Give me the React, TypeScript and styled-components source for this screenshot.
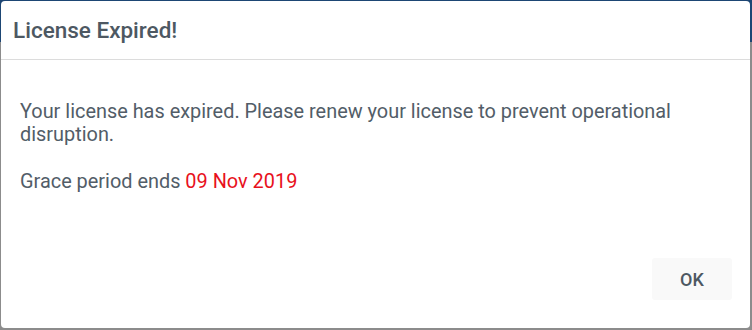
import React from "react";
import styled, { createGlobalStyle } from "styled-components";

const Global = createGlobalStyle`
  html, body { margin: 0; padding: 0; }
  body {
    width: 752px;
    height: 330px;
    background: #8c8c8c;
    font-family: Roboto, "Noto Sans", Arial, sans-serif;
    overflow: hidden;
  }
`;

const PageHeader = styled.div`
  height: 42px;
  background: #1d4674;
`;

const Dialog = styled.div`
  position: fixed;
  left: 1px;
  top: 1px;
  width: 749px;
  height: 327px;
  background: #ffffff;
  border-radius: 4px;
  display: flex;
  flex-direction: column;
  box-sizing: border-box;
`;

const Header = styled.div`
  height: 58px;
  display: flex;
  align-items: center;
  padding: 0 12px;
  border-bottom: 1px solid #dcdcdc;
`;

const Title = styled.h2`
  margin: 0;
  font-size: 22.5px;
  font-weight: 500;
  color: #4d5862;
`;

const Body = styled.div`
  flex: 1;
  padding: 40px 19px 0 19px;
  color: #525d68;
  font-size: 19.9px;
  line-height: 23px;
`;

const Paragraph = styled.p`
  margin: 0 0 24px 0;
`;

const Date = styled.span`
  color: #e8111c;
`;

const Footer = styled.div`
  display: flex;
  justify-content: flex-end;
  padding: 0 18px 28px 0;
`;

const Button = styled.button`
  width: 80px;
  height: 42px;
  border: none;
  border-radius: 3px;
  background: #f9f9f9;
  color: #4d5862;
  font-family: Roboto, "Noto Sans", Arial, sans-serif;
  font-size: 18px;
  font-weight: 500;
  cursor: pointer;
`;

export default function App() {
  return (
    <>
      <Global />
      <PageHeader />
      <Dialog>
        <Header>
          <Title>License Expired!</Title>
        </Header>
        <Body>
          <Paragraph>
            Your license has expired. Please renew your license to prevent operational disruption.
          </Paragraph>
          <Paragraph>
            Grace period ends <Date>09 Nov 2019</Date>
          </Paragraph>
        </Body>
        <Footer>
          <Button>OK</Button>
        </Footer>
      </Dialog>
    </>
  );
}
